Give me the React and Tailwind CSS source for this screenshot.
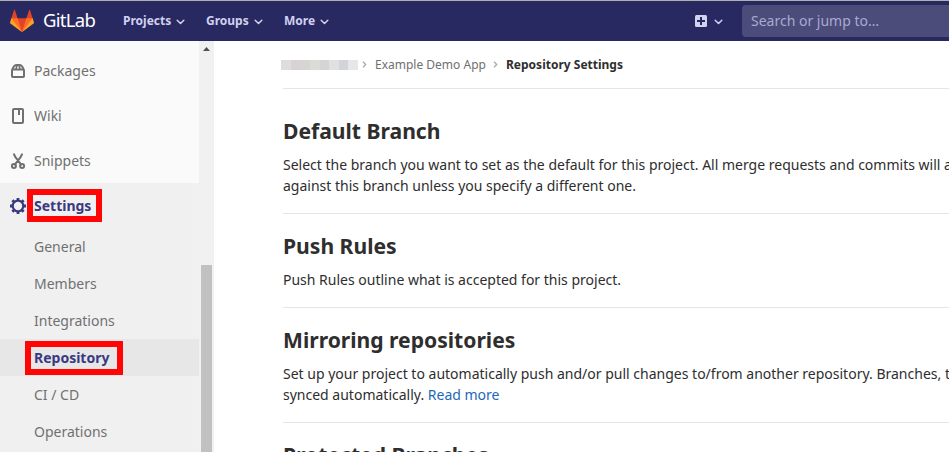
import React from "react";

const Chevron = ({ className = "" }) => (
  <svg className={`relative top-px ${className}`} width="9" height="6" viewBox="0 0 9 6" fill="none" stroke="currentColor" strokeWidth="1.5" strokeLinecap="round" strokeLinejoin="round">
    <path d="M1.200 1.200l3.300 3.300l3.300-3.300" />
  </svg>
);

const Tanuki = () => (
  <svg width="24" height="24" viewBox="0 0 36 36">
    <path fill="#e24329" d="M2 14l9.38 9v-9l-4-12.28c-.205-.632-1.176-.632-1.38 0z" />
    <path fill="#e24329" d="M34 14l-9.38 9v-9l4-12.28c.205-.632 1.176-.632 1.38 0z" />
    <path fill="#e24329" d="M18 34.38L3 14h30z" />
    <path fill="#fc6d26" d="M18 34.38L11.38 14H2l4 11z" />
    <path fill="#fc6d26" d="M18 34.38L24.62 14H34l-4 11z" />
    <path fill="#fca326" d="M2 14L.1 20.16c-.18.565 0 1.2.5 1.56L18 34.38z" />
    <path fill="#fca326" d="M34 14l1.9 6.16c.18.565 0 1.2-.5 1.56L18 34.38z" />
  </svg>
);

const icons = {
  package: (
    <g fill="none" stroke="currentColor" strokeWidth="2" strokeLinejoin="round">
      <rect x="2" y="6.6" width="12" height="7.4" rx="0.8" />
      <path d="M2.300 6.500C3.200 4 4.500 2 6.700 2h2.600c2.200 0 3.500 2 4.400 4.500" />
      <path d="M7 2.500L6 6M9 2.500l1 3.500" strokeWidth="1.600" />
    </g>
  ),
  book: (
    <g fill="none" stroke="currentColor" strokeWidth="2">
      <rect x="3" y="1" width="10" height="14" rx="1" />
      <path d="M9 1.500V7" strokeWidth="2" />
    </g>
  ),
  snippet: (
    <g fill="none" stroke="currentColor" strokeWidth="2">
      <circle cx="3.900" cy="13" r="2" />
      <circle cx="12.100" cy="13" r="2" />
      <path d="M4 1.300L5.400 4.200L11 11.400M12 1.300L10.600 4.200L5 11.400" strokeLinecap="round" strokeLinejoin="round" />
    </g>
  ),
  settings: (
    <g fill="none" stroke="currentColor">
      <circle cx="8" cy="8" r="5.300" strokeWidth="2.200" />
      <path
        d="M8 0v2.500M8 13.500V16M0 8h2.500M13.500 8H16M2.350 2.350l1.750 1.750M11.900 11.900l1.750 1.750M2.350 13.650l1.750-1.750M11.900 4.100l1.750-1.750"
        strokeWidth="2.800"
      />
    </g>
  ),
};

const NavIcon = ({ name }) => (
  <svg width="16" height="16" viewBox="0 0 16 16" className="shrink-0">
    {icons[name]}
  </svg>
);

const Highlight = ({ className }) => (
  <span className={`pointer-events-none absolute border-6 border-[#ff0505] ${className}`} />
);

const NavItem = ({ icon, children }) => (
  <li className="flex h-[45px] items-center gap-2 pl-2.5">
    <NavIcon name={icon} />
    <span>{children}</span>
  </li>
);

const SubItem = ({ children }) => <li className="flex h-[37px] items-center pl-[34px]">{children}</li>;

const Sidebar = () => (
  <aside className="flex w-[214px] shrink-0 bg-[#fafafa] text-sm text-[#707070]">
    <nav className="flex w-[199px] shrink-0 flex-col pt-[7px]">
      <ul>
        <NavItem icon="package">Packages</NavItem>
        <NavItem icon="book">Wiki</NavItem>
        <NavItem icon="snippet">Snippets</NavItem>
      </ul>
      <div className="flex-1 bg-[#f0f0f0]">
        <div className="relative flex h-[45px] items-center gap-2 pl-2.5 font-bold text-[#393982]">
          <NavIcon name="settings" />
          <span>Settings</span>
          <Highlight className="left-[27px] top-[6px] h-[33px] w-[75px]" />
        </div>
        <ul>
          <SubItem>General</SubItem>
          <SubItem>Members</SubItem>
          <SubItem>Integrations</SubItem>
          <li className="relative flex h-[37px] items-center bg-[#e7e7e7] pl-[34px] font-bold text-[#393982]">
            Repository
            <Highlight className="left-[25px] top-[2px] h-[34px] w-[98px]" />
          </li>
          <SubItem>CI / CD</SubItem>
          <SubItem>Operations</SubItem>
        </ul>
      </div>
    </nav>
    <div className="flex w-[15px] flex-col bg-[#f1f1f1] pl-0.5">
      <svg className="mt-[5px] ml-0.5 shrink-0" width="7" height="5" viewBox="0 0 7 5">
        <path d="M0 5h7L3.500 1z" fill="#505050" />
      </svg>
      <div className="mt-[214px] w-[11px] flex-1 bg-[#c1c1c1]" />
    </div>
  </aside>
);

const Crumb = () => (
  <svg width="5" height="7" viewBox="0 0 5 7" fill="none" stroke="#aaa" strokeWidth="1.300">
    <path d="M1 0.800L3.700 3.500L1 6.200" />
  </svg>
);

const Section = ({ title, children, className = "pt-5" }) => (
  <section className={`border-t border-[#e5e5e5] pb-[17px] ${className}`}>
    <h4 className="mb-[11px] text-[21.1px] leading-6 font-bold">{title}</h4>
    <div className="text-sm leading-[21px] whitespace-nowrap">{children}</div>
  </section>
);

const Redacted = () => (
  <div className="flex h-[10px] w-[77px]">
    <i className="flex-1 bg-[#dddddd]" />
    <i className="flex-1 bg-[#d8d2d2]" />
    <i className="flex-1 bg-[#d7d5d4]" />
    <i className="flex-1 bg-[#dcdcd7]" />
    <i className="flex-1 bg-[#d5d5d6]" />
    <i className="flex-1 bg-[#dfe0e3]" />
    <i className="flex-1 bg-[#d3d4d7]" />
    <i className="flex-1 bg-[#e6e7e9]" />
  </div>
);

export default function App() {
  return (
    <div className="flex h-[452px] w-[949px] flex-col overflow-hidden bg-white font-['Noto_Sans',sans-serif] text-[#2e2e2e]">
      <header className="flex h-[41px] shrink-0 items-center border-t border-[#b0b0b0] bg-[#292961] pl-2.5 text-[#d1d1f0]">
        <Tanuki />
        <span className="mb-px ml-[9px] w-[80px] text-[18.5px] leading-none tracking-[-0.7px] text-white">GitLab</span>
        <nav className="flex text-xs font-bold">
          <span className="flex w-[83px] items-center gap-[5px]">Projects<Chevron /></span>
          <span className="flex w-[78px] items-center gap-[5px]">Groups<Chevron /></span>
          <span className="flex items-center gap-[5px]">More<Chevron /></span>
        </nav>
        <div className="ml-auto flex items-center gap-[7px]">
          <svg width="12" height="12" viewBox="0 0 12 12">
            <rect width="12" height="12" rx="1.500" fill="#d1d1f0" />
            <path d="M6 2v8M2 6h8" stroke="#292961" strokeWidth="2" />
          </svg>
          <Chevron />
        </div>
        <div className="ml-[19px] flex h-8 w-[207px] shrink-0 items-center rounded-l bg-[#4c4c7b] pl-[9px] text-sm text-[#a9a9cf]">
          Search or jump to…
        </div>
      </header>
      <div className="flex min-h-0 flex-1">
        <Sidebar />
        <main className="min-w-0 flex-1 overflow-hidden pl-[69px]">
          <div className="-ml-0.5 flex h-[47px] items-center text-xs text-[#707070]">
            <Redacted />
            <span className="ml-1"><Crumb /></span>
            <span className="ml-2 w-[112px]">Example Demo App</span>
            <span className="ml-1.5"><Crumb /></span>
            <span className="ml-2 font-bold text-[#2e2e2e]">Repository Settings</span>
          </div>
          <Section title="Default Branch" className="pt-[30px]">
            Select the branch you want to set as the default for this project. All merge requests and commits will automatically be made
            <br />
            against this branch unless you specify a different one.
          </Section>
          <Section title="Push Rules">Push Rules outline what is accepted for this project.</Section>
          <Section title="Mirroring repositories">
            Set up your project to automatically push and/or pull changes to/from another repository. Branches, tags, and commits will be
            <br />
            synced automatically. <a className="text-[#1b69b6]">Read more</a>
          </Section>
          <Section title="Protected Branches" />
        </main>
      </div>
    </div>
  );
}
